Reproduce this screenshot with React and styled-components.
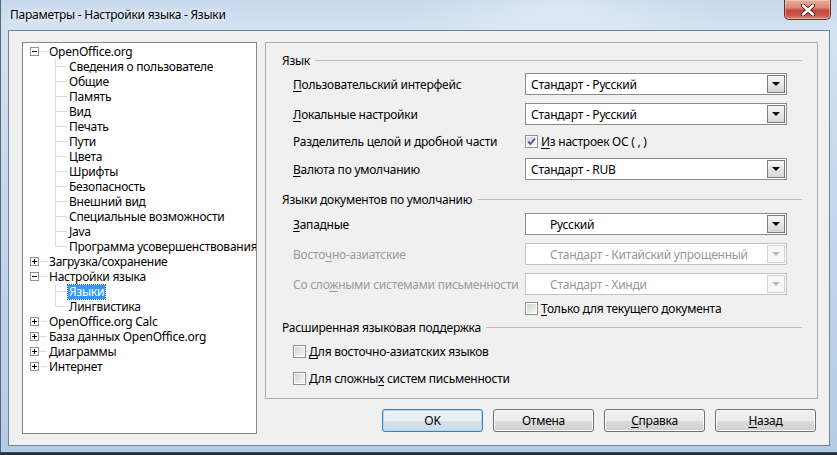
import React from 'react';
import styled, { createGlobalStyle } from 'styled-components';

const FONT = `"Noto Sans", "Open Sans", sans-serif`;

const GlobalStyle = createGlobalStyle`
  html, body { margin: 0; padding: 0; }
  body {
    background: #27313d;
    font-family: ${FONT};
    font-size: 12px;
    letter-spacing: -0.25px;
    color: #000;
    width: 837px;
    height: 455px;
    overflow: hidden;
  }
  * { box-sizing: border-box; }
`;

const Window = styled.div`
  width: 837px;
  height: 453px;
  display: flex;
  flex-direction: column;
  border-left: 1px solid #56677c;
  border-bottom: 1px solid #3b4859;
  background:
    radial-gradient(ellipse 160px 40px at 560px 8px, rgba(255,255,255,0.35), transparent),
    linear-gradient(180deg, #c6d8ec 0px, #d4e2f1 28px, #bfd3ea 60%, #b6cce6 100%);
`;

const TitleBar = styled.div`
  height: 30px;
  display: flex;
  align-items: flex-start;
  flex-shrink: 0;
`;

const Title = styled.div`
  padding: 6px 0 0 9px;
  font-size: 12px;
  line-height: 17px;
  color: #000;
  text-shadow: 0 0 6px rgba(255,255,255,0.95), 0 0 10px rgba(255,255,255,0.8);
`;

const CloseButton = styled.div`
  margin-left: auto;
  margin-right: 6px;
  width: 47px;
  height: 20px;
  border: 1px solid #6a2b22;
  border-top: none;
  border-radius: 0 0 5px 5px;
  background: linear-gradient(180deg, #e9a99b 0%, #d98a7b 40%, #c2483a 55%, #c8574a 80%, #db8a76 100%);
  box-shadow: inset 0 0 0 1px rgba(255,255,255,0.35);
  display: flex;
  align-items: center;
  justify-content: center;
`;

const Client = styled.div`
  margin: 0 7px 0 7px;
  height: 416px;
  border: 1px solid #70839b;
  background: #f0f0f0;
  display: flex;
  gap: 8px;
  padding: 11px 11px 0 13px;
`;

const Tree = styled.div`
  width: 235px;
  height: 392px;
  flex-shrink: 0;
  border: 1px solid #828790;
  background: #fff;
  padding-top: 1px;
  overflow: hidden;
`;

const RootRow = styled.div`
  height: 15px;
  line-height: 14px;
  display: flex;
  align-items: center;
  white-space: nowrap;
`;

const Expander = styled.span`
  width: 9px;
  height: 9px;
  margin-left: 7px;
  border: 1px solid #919191;
  background: #fff;
  position: relative;
  flex-shrink: 0;
  &::before {
    content: '';
    position: absolute;
    left: 1px;
    top: 3px;
    width: 5px;
    height: 1px;
    background: #000;
  }
  &::after {
    content: '';
    display: ${p => (p.$open ? 'none' : 'block')};
    position: absolute;
    left: 3px;
    top: 1px;
    width: 1px;
    height: 5px;
    background: #000;
  }
`;

const Stub = styled.span`
  width: 8px;
  height: 1px;
  background: #dcdcdc;
  margin-right: 1px;
  flex-shrink: 0;
`;

const ChildGroup = styled.div`
  position: relative;
  &::before {
    content: '';
    position: absolute;
    left: 32px;
    top: 0;
    bottom: 7px;
    width: 1px;
    background: #dcdcdc;
  }
`;

const ChildRow = styled.div`
  height: 15px;
  line-height: 14px;
  display: flex;
  align-items: center;
  padding-left: 45px;
  position: relative;
  white-space: nowrap;
  &::before {
    content: '';
    position: absolute;
    left: 33px;
    top: 7px;
    width: 11px;
    height: 1px;
    background: #dcdcdc;
  }
`;

const NodeText = styled.span`
  line-height: 14px;
  padding: 0 1px;
  background: ${p => (p.$selected ? '#3399ff' : 'transparent')};
  color: ${p => (p.$selected ? '#fff' : '#000')};
  outline: ${p => (p.$selected ? '1px dotted #1c5fa8' : 'none')};
`;

const RightColumn = styled.div`
  flex: 1;
  display: flex;
  flex-direction: column;
`;

const Panel = styled.div`
  height: 357px;
  border: 1px solid #a9a9a9;
  padding: 9px 15px 0 16px;
  display: flex;
  flex-direction: column;
`;

const SectionHeader = styled.div`
  height: 16px;
  display: flex;
  align-items: center;
  gap: 5px;
  margin-top: ${p => p.$mt || 0}px;
  white-space: nowrap;
  &::after {
    content: '';
    flex: 1;
    height: 1px;
    background: #bdbdbd;
  }
`;

const FieldRow = styled.div`
  display: grid;
  grid-template-columns: 232px 262px;
  align-items: center;
  height: ${p => p.$h}px;
  margin-top: ${p => p.$mt}px;
  padding-left: 11px;
`;

const Label = styled.span`
  white-space: nowrap;
  color: ${p => (p.$disabled ? '#9b9b9b' : '#000')};
`;

const U = styled.span`
  text-decoration: underline;
  text-underline-offset: 2px;
`;

const Select = styled.div`
  width: 262px;
  height: 22px;
  border: 1px solid ${p => (p.$disabled ? '#c3c3c3' : '#8b8b8b')};
  background: #fff;
  display: flex;
  align-items: center;
  padding: 0 1px 0 ${p => (p.$indent ? 24 : 5)}px;
  color: ${p => (p.$disabled ? '#979797' : '#000')};
`;

const SelectText = styled.span`
  flex: 1;
  white-space: nowrap;
`;

const ArrowButton = styled.div`
  width: 18px;
  height: 18px;
  border: 1px solid ${p => (p.$disabled ? '#d2d2d2' : '#7a7a7a')};
  background: ${p =>
    p.$disabled
      ? '#f7f7f7'
      : 'linear-gradient(180deg, #f6f6f6 0%, #e8e8e8 50%, #d6d6d6 100%)'};
  display: flex;
  align-items: center;
  justify-content: center;
  &::after {
    content: '';
    border-left: 4px solid transparent;
    border-right: 4px solid transparent;
    border-top: 4px solid ${p => (p.$disabled ? '#b9b9b9' : '#000')};
  }
`;

const CheckLine = styled.label`
  display: flex;
  align-items: center;
  gap: 3px;
  white-space: nowrap;
  height: ${p => p.$h || 17}px;
  margin-top: ${p => p.$mt || 0}px;
  padding-left: ${p => p.$pl || 0}px;
`;

const Box = styled.span`
  width: 13px;
  height: 13px;
  flex-shrink: 0;
  border: 1px solid #8e8f8f;
  background: #fff;
  padding: 1px;
  display: flex;
  & > span {
    flex: 1;
    background: linear-gradient(135deg, #d4d4d4 0%, #f6f6f6 100%);
    display: flex;
    align-items: center;
    justify-content: center;
  }
`;

const ButtonRow = styled.div`
  display: flex;
  justify-content: flex-end;
  gap: 10px;
  margin-top: 10px;
  padding-right: 2px;
`;

const Button = styled.button`
  width: 101px;
  height: 23px;
  font-family: ${FONT};
  font-size: 12px;
  letter-spacing: -0.25px;
  color: #000;
  padding: 0;
  border-radius: 3px;
  border: 1px solid ${p => (p.$default ? '#3c7fb1' : '#707070')};
  background: ${p =>
    p.$default
      ? 'linear-gradient(180deg, #eef4f8 0%, #e6eef4 50%, #d7e3ec 50%, #cbdae6 100%)'
      : 'linear-gradient(180deg, #f2f2f2 0%, #ebebeb 50%, #dddddd 50%, #cfcfcf 100%)'};
  box-shadow: inset 0 0 0 1px ${p => (p.$default ? '#a9dbf6' : '#fbfbfb')};
`;

function CheckBox({ checked }) {
  return (
    <Box>
      <span>
        {checked && (
          <svg width="9" height="9" viewBox="0 0 9 9">
            <path d="M1.2 4.6 L3.5 7 L7.8 1.6" fill="none" stroke="#3d5a8f" strokeWidth="1.7" />
          </svg>
        )}
      </span>
    </Box>
  );
}

function Dropdown({ text, disabled, indent }) {
  return (
    <Select $disabled={disabled} $indent={indent}>
      <SelectText>{text}</SelectText>
      <ArrowButton $disabled={disabled} />
    </Select>
  );
}

const tree = [
  {
    label: 'OpenOffice.org',
    open: true,
    children: [
      'Сведения о пользователе',
      'Общие',
      'Память',
      'Вид',
      'Печать',
      'Пути',
      'Цвета',
      'Шрифты',
      'Безопасность',
      'Внешний вид',
      'Специальные возможности',
      'Java',
      'Программа усовершенствования',
    ],
  },
  { label: 'Загрузка/сохранение' },
  { label: 'Настройки языка', open: true, children: ['Языки', 'Лингвистика'] },
  { label: 'OpenOffice.org Calc' },
  { label: 'База данных OpenOffice.org' },
  { label: 'Диаграммы' },
  { label: 'Интернет' },
];

export default function App() {
  return (
    <>
      <GlobalStyle />
      <Window>
        <TitleBar>
          <Title>Параметры - Настройки языка - Языки</Title>
          <CloseButton>
            <svg width="16" height="12" viewBox="0 0 16 12">
              <path d="M3 1.5 L13 10.5 M13 1.5 L3 10.5" stroke="#4a1d18" strokeWidth="4.2" strokeLinecap="round" />
              <path d="M3 1.5 L13 10.5 M13 1.5 L3 10.5" stroke="#ffffff" strokeWidth="2.4" strokeLinecap="round" />
            </svg>
          </CloseButton>
        </TitleBar>
        <Client>
          <Tree>
            {tree.map(node => (
              <React.Fragment key={node.label}>
                <RootRow>
                  <Expander $open={node.open} />
                  <Stub />
                  <NodeText>{node.label}</NodeText>
                </RootRow>
                {node.open && (
                  <ChildGroup>
                    {node.children.map(c => (
                      <ChildRow key={c}>
                        <NodeText $selected={c === 'Языки'}>{c}</NodeText>
                      </ChildRow>
                    ))}
                  </ChildGroup>
                )}
              </React.Fragment>
            ))}
          </Tree>
          <RightColumn>
            <Panel>
              <SectionHeader>Язык</SectionHeader>
              <FieldRow $h={22} $mt={5}>
                <Label><U>П</U>ользовательский интерфейс</Label>
                <Dropdown text="Стандарт - Русский" />
              </FieldRow>
              <FieldRow $h={22} $mt={8}>
                <Label><U>Л</U>окальные настройки</Label>
                <Dropdown text="Стандарт - Русский" />
              </FieldRow>
              <FieldRow $h={17} $mt={8}>
                <Label>Разделитель целой и дробной части</Label>
                <CheckLine>
                  <CheckBox checked />
                  <span><U>И</U>з настроек ОС ( , )</span>
                </CheckLine>
              </FieldRow>
              <FieldRow $h={22} $mt={8}>
                <Label><U>В</U>алюта по умолчанию</Label>
                <Dropdown text="Стандарт - RUB" />
              </FieldRow>

              <SectionHeader $mt={11}>Языки документов по умолчанию</SectionHeader>
              <FieldRow $h={22} $mt={6}>
                <Label><U>З</U>ападные</Label>
                <Dropdown text="Русский" indent />
              </FieldRow>
              <FieldRow $h={22} $mt={8}>
                <Label $disabled>Восто<U>ч</U>но-азиатские</Label>
                <Dropdown text="Стандарт - Китайский упрощенный" indent disabled />
              </FieldRow>
              <FieldRow $h={22} $mt={8}>
                <Label $disabled>Со сло<U>ж</U>ными системами письменности</Label>
                <Dropdown text="Стандарт - Хинди" indent disabled />
              </FieldRow>
              <FieldRow $h={14} $mt={6}>
                <span />
                <CheckLine $h={14}>
                  <CheckBox />
                  <span><U>Т</U>олько для текущего документа</span>
                </CheckLine>
              </FieldRow>

              <SectionHeader $mt={4}>Расширенная языковая поддержка</SectionHeader>
              <CheckLine $mt={8} $pl={11}>
                <CheckBox />
                <span><U>Д</U>ля восточно-азиатских языков</span>
              </CheckLine>
              <CheckLine $mt={10} $pl={11}>
                <CheckBox />
                <span>Для сложны<U>х</U> систем письменности</span>
              </CheckLine>
            </Panel>
            <ButtonRow>
              <Button $default>OK</Button>
              <Button>Отмена</Button>
              <Button><U>С</U>правка</Button>
              <Button><U>Н</U>азад</Button>
            </ButtonRow>
          </RightColumn>
        </Client>
      </Window>
    </>
  );
}
